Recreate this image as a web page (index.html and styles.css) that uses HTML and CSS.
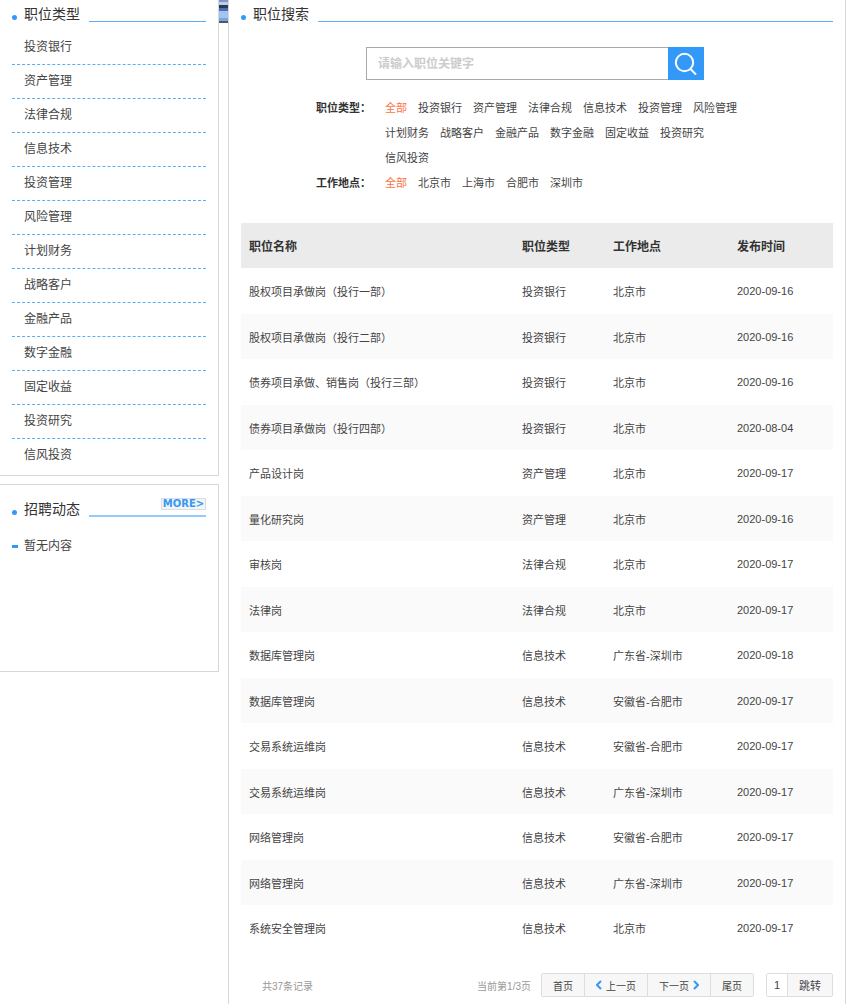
FILE: index.html
```html
<!DOCTYPE html>
<html lang="zh-CN">
<head>
    <meta charset="UTF-8">
    <meta name="viewport" content="width=device-width, initial-scale=1.0">
    <title>职位搜索</title>
    <link rel="stylesheet" href="styles.css">
</head>
<body>
    <div class="page">
        <aside class="sidebar">
            <section class="panel">
                <div class="title-bar">
                    <h2>职位类型</h2>
                    <span class="line"></span>
                </div>
                <ul class="type-list">
                    <li><a href="#">投资银行</a></li>
                    <li><a href="#">资产管理</a></li>
                    <li><a href="#">法律合规</a></li>
                    <li><a href="#">信息技术</a></li>
                    <li><a href="#">投资管理</a></li>
                    <li><a href="#">风险管理</a></li>
                    <li><a href="#">计划财务</a></li>
                    <li><a href="#">战略客户</a></li>
                    <li><a href="#">金融产品</a></li>
                    <li><a href="#">数字金融</a></li>
                    <li><a href="#">固定收益</a></li>
                    <li><a href="#">投资研究</a></li>
                    <li><a href="#">信风投资</a></li>
                </ul>
            </section>
            <section class="panel news">
                <div class="title-bar">
                    <h2>招聘动态</h2>
                    <span class="line"><a class="more" href="#">MORE&gt;</a></span>
                </div>
                <p class="empty">暂无内容</p>
            </section>
        </aside>

        <div class="gutter"><div class="banner"></div></div>

        <main class="main">
            <div class="title-bar">
                <h2>职位搜索</h2>
                <span class="line"></span>
            </div>

            <form class="search">
                <input type="text" placeholder="请输入职位关键字" aria-label="请输入职位关键字">
                <button type="button" aria-label="搜索">
                    <svg width="24" height="24" viewBox="0 0 24 24" fill="none" stroke="#fff" stroke-width="2">
                        <circle cx="10.5" cy="10.5" r="8.7"/>
                        <path d="M16.5 17l5.5 5.5"/>
                    </svg>
                </button>
            </form>

            <dl class="filters">
                <dt>职位类型：</dt>
                <dd>
                    <a class="active" href="#">全部</a>
                    <a href="#">投资银行</a>
                    <a href="#">资产管理</a>
                    <a href="#">法律合规</a>
                    <a href="#">信息技术</a>
                    <a href="#">投资管理</a>
                    <a href="#">风险管理</a>
                    <a href="#">计划财务</a>
                    <a href="#">战略客户</a>
                    <a href="#">金融产品</a>
                    <a href="#">数字金融</a>
                    <a href="#">固定收益</a>
                    <a href="#">投资研究</a>
                    <a href="#">信风投资</a>
                </dd>
                <dt>工作地点：</dt>
                <dd>
                    <a class="active" href="#">全部</a>
                    <a href="#">北京市</a>
                    <a href="#">上海市</a>
                    <a href="#">合肥市</a>
                    <a href="#">深圳市</a>
                </dd>
            </dl>

            <table class="jobs">
                <thead>
                    <tr><th class="name">职位名称</th><th class="type">职位类型</th><th class="place">工作地点</th><th class="date">发布时间</th></tr>
                </thead>
                <tbody>
                    <tr><td>股权项目承做岗（投行一部）</td><td>投资银行</td><td>北京市</td><td>2020-09-16</td></tr>
                    <tr><td>股权项目承做岗（投行二部）</td><td>投资银行</td><td>北京市</td><td>2020-09-16</td></tr>
                    <tr><td>债券项目承做、销售岗（投行三部）</td><td>投资银行</td><td>北京市</td><td>2020-09-16</td></tr>
                    <tr><td>债券项目承做岗（投行四部）</td><td>投资银行</td><td>北京市</td><td>2020-08-04</td></tr>
                    <tr><td>产品设计岗</td><td>资产管理</td><td>北京市</td><td>2020-09-17</td></tr>
                    <tr><td>量化研究岗</td><td>资产管理</td><td>北京市</td><td>2020-09-16</td></tr>
                    <tr><td>审核岗</td><td>法律合规</td><td>北京市</td><td>2020-09-17</td></tr>
                    <tr><td>法律岗</td><td>法律合规</td><td>北京市</td><td>2020-09-17</td></tr>
                    <tr><td>数据库管理岗</td><td>信息技术</td><td>广东省-深圳市</td><td>2020-09-18</td></tr>
                    <tr><td>数据库管理岗</td><td>信息技术</td><td>安徽省-合肥市</td><td>2020-09-17</td></tr>
                    <tr><td>交易系统运维岗</td><td>信息技术</td><td>安徽省-合肥市</td><td>2020-09-17</td></tr>
                    <tr><td>交易系统运维岗</td><td>信息技术</td><td>广东省-深圳市</td><td>2020-09-17</td></tr>
                    <tr><td>网络管理岗</td><td>信息技术</td><td>安徽省-合肥市</td><td>2020-09-17</td></tr>
                    <tr><td>网络管理岗</td><td>信息技术</td><td>广东省-深圳市</td><td>2020-09-17</td></tr>
                    <tr><td>系统安全管理岗</td><td>信息技术</td><td>北京市</td><td>2020-09-17</td></tr>
                </tbody>
            </table>

            <div class="pager">
                <span class="total">共37条记录</span>
                <span class="current">当前第1/3页</span>
                <div class="group">
                    <button type="button">首页</button>
                    <button type="button"><svg width="6" height="10" viewBox="0 0 6 10"><path d="M5 1L1 5l4 4"/></svg>上一页</button>
                    <button type="button">下一页<svg width="6" height="10" viewBox="0 0 6 10"><path d="M1 1l4 4-4 4"/></svg></button>
                    <button type="button">尾页</button>
                </div>
                <div class="group jump">
                    <input type="text" value="1" aria-label="页码">
                    <button type="button">跳转</button>
                </div>
            </div>
        </main>
    </div>
</body>
</html>
```
FILE: styles.css
```css
* {
    box-sizing: border-box;
}
body {
    margin: 0;
    background-color: #fff;
    color: #444;
    font-family: "Liberation Sans", "Noto Sans CJK SC", sans-serif;
    font-size: 11px;
}
a {
    color: inherit;
    text-decoration: none;
}
button, input {
    font-family: inherit;
    color: inherit;
    margin: 0;
}
.page {
    display: flex;
    min-height: 100vh;
    padding-right: 3px;
}

/* left column */
.sidebar {
    flex: 0 0 219px;
}
.panel {
    padding: 0 12px 2px;
    border-right: 1px solid #d8d8d8;
    border-bottom: 1px solid #d8d8d8;
}
.title-bar {
    display: flex;
    height: 31px;
}
.title-bar h2 {
    display: flex;
    align-items: center;
    gap: 7px;
    height: 28px;
    margin: 0 9px 0 0;
    font-size: 14px;
    font-weight: normal;
    line-height: 28px;
    color: #333;
}
.title-bar h2::before {
    content: "";
    width: 5px;
    height: 5px;
    margin-top: 6px;
    border-radius: 50%;
    background-color: #3399f8;
}
.title-bar .line {
    flex: 1;
    height: 22px;
    border-bottom: 1px solid #5baef5;
}
.type-list {
    margin: 0;
    padding: 0;
    list-style: none;
    font-size: 12px;
}
.type-list li {
    height: 34px;
    padding-left: 12px;
    line-height: 32px;
    border-bottom: 1px dashed #5baef5;
}
.type-list li:last-child {
    border-bottom: none;
}
.news {
    height: 188px;
    margin-top: 8px;
    padding-top: 10px;
    border-top: 1px solid #d8d8d8;
}
.news .line {
    text-align: right;
    border-bottom: 2px solid #93cbfb;
}
.more {
    display: inline-block;
    width: 45px;
    height: 12px;
    margin-top: 3px;
    border: 1px solid #ddd;
    background-color: #f4f4f4;
    color: #3399f8;
    font: bold 10px/10px "DejaVu Sans", sans-serif;
    text-align: center;
}
.empty {
    display: flex;
    align-items: center;
    gap: 6px;
    margin: 8px 0 0;
    font-size: 12px;
    line-height: 24px;
}
.empty::before {
    content: "";
    width: 6px;
    height: 3px;
    background-color: #3399f8;
}

/* end of the banner shows between the columns */
.gutter {
    flex: 0 0 9px;
}
.banner {
    height: 23px;
    background: linear-gradient(#8095c0 0 2px, #b9cdf0 2px 5px, #303850 5px 8px, #4a70b5 8px 11px, #a3c3f3 11px 18px, #7ea4dd 18px 21px, #4c5c60 21px);
}

/* right column */
.main {
    flex: 1;
    min-width: 0;
    padding: 0 12px;
    border-left: 1px solid #d8d8d8;
    border-right: 1px solid #d8d8d8;
}
.search {
    display: flex;
    width: 338px;
    height: 33px;
    margin: 16px 0 0 125px;
}
.search input {
    flex: 1;
    min-width: 0;
    padding: 0 11px;
    border: 1px solid #aaa;
    border-right: none;
    border-radius: 0;
    font-size: 12px;
}
.search input::placeholder {
    color: #ccc;
    font-weight: bold;
}
.search button {
    display: flex;
    align-items: center;
    justify-content: center;
    width: 36px;
    padding: 0;
    border: none;
    background-color: #3399f8;
    cursor: pointer;
}
.filters {
    display: grid;
    grid-template-columns: 69px minmax(0, 360px);
    margin: 16px 0 27px 75px;
    line-height: 25px;
}
.filters dt {
    font-weight: bold;
    color: #333;
}
.filters dd {
    display: flex;
    flex-wrap: wrap;
    column-gap: 11px;
    margin: 0;
}
.filters .active {
    color: #ff7043;
}
.jobs {
    width: 100%;
    table-layout: fixed;
    border-collapse: collapse;
}
.jobs th, .jobs td {
    height: 45px;
    padding: 0 8px;
    text-align: left;
    white-space: nowrap;
}
.jobs th {
    background-color: #ebebeb;
    font-size: 12px;
    color: #333;
}
.jobs tbody tr:nth-child(odd) td {
    height: 46px;
}
.jobs tbody tr:nth-child(even) {
    background-color: #fafafa;
}
.jobs .type {
    width: 91px;
}
.jobs .place {
    width: 124px;
}
.jobs .date {
    width: 104px;
}
.pager {
    display: flex;
    align-items: center;
    margin-top: 22px;
    padding: 0 0 6px 21px;
    font-size: 10px;
}
.pager .total, .pager .current {
    color: #999;
}
.pager .current {
    margin: 0 10px 0 auto;
}
.pager .group {
    display: flex;
    height: 24px;
    border: 1px solid #ddd;
    border-radius: 2px;
}
.pager button {
    display: flex;
    align-items: center;
    gap: 4px;
    padding: 0 11px;
    border: none;
    background-color: #f7f7f7;
    font-size: 10px;
    cursor: pointer;
}
.pager button + button {
    border-left: 1px solid #ddd;
}
.pager svg {
    fill: none;
    stroke: #3399f8;
    stroke-width: 2;
}
.pager .jump {
    margin-left: 12px;
}
.jump input {
    width: 21px;
    padding: 0;
    border: none;
    border-right: 1px solid #ddd;
    font-size: 11px;
    text-align: center;
}
.jump button {
    font-size: 11px;
}
```
